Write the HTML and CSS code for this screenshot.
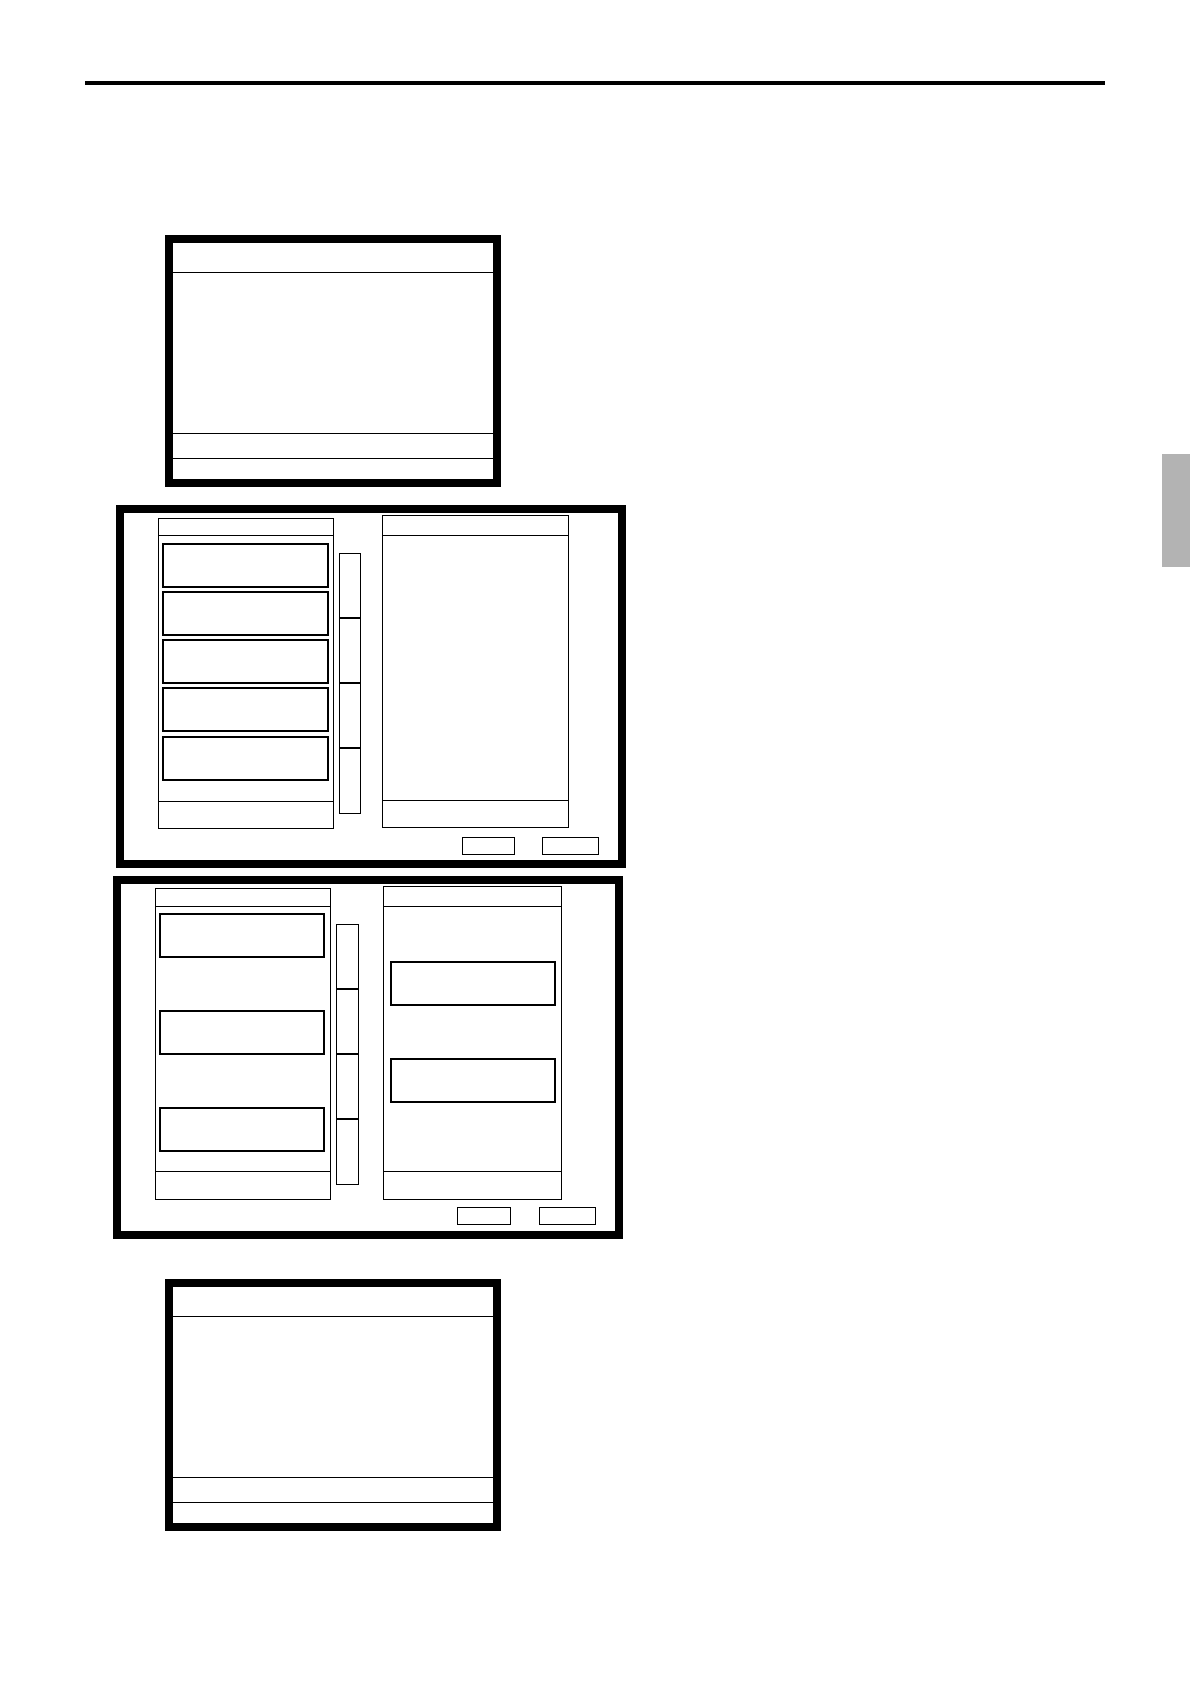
FILE: index.html
```html
<!DOCTYPE html>
<html lang="en">
<head>
<meta charset="utf-8">
<title>Screens</title>
<link rel="stylesheet" href="styles.css">
</head>
<body>
<div class="page">
  <div class="rule"></div>
  <div class="thumb-tab"></div>

  <div class="screen screen--one">
    <div class="scr-head"></div>
    <div class="scr-body"></div>
    <div class="scr-row"></div>
    <div class="scr-foot"></div>
  </div>

  <div class="dialog dialog--a">
    <div class="dlg-main">
      <div class="panel panel--left">
        <div class="panel-head"></div>
        <div class="panel-body list-dense">
          <div class="item"></div>
          <div class="item"></div>
          <div class="item"></div>
          <div class="item"></div>
          <div class="item"></div>
        </div>
        <div class="panel-foot"></div>
      </div>
      <div class="scroll">
        <div class="seg"></div>
        <div class="seg"></div>
        <div class="seg"></div>
        <div class="seg"></div>
      </div>
      <div class="panel panel--right">
        <div class="panel-head"></div>
        <div class="panel-body"></div>
        <div class="panel-foot"></div>
      </div>
    </div>
    <div class="dlg-actions">
      <div class="btn btn--ok"></div>
      <div class="btn btn--cancel"></div>
    </div>
  </div>

  <div class="dialog dialog--b">
    <div class="dlg-main">
      <div class="panel panel--left">
        <div class="panel-head"></div>
        <div class="panel-body list-sparse">
          <div class="item"></div>
          <div class="item"></div>
          <div class="item"></div>
        </div>
        <div class="panel-foot"></div>
      </div>
      <div class="scroll">
        <div class="seg"></div>
        <div class="seg"></div>
        <div class="seg"></div>
        <div class="seg"></div>
      </div>
      <div class="panel panel--right">
        <div class="panel-head"></div>
        <div class="panel-body list-right">
          <div class="item"></div>
          <div class="item"></div>
        </div>
        <div class="panel-foot"></div>
      </div>
    </div>
    <div class="dlg-actions">
      <div class="btn btn--ok"></div>
      <div class="btn btn--cancel"></div>
    </div>
  </div>

  <div class="screen screen--two">
    <div class="scr-head"></div>
    <div class="scr-body"></div>
    <div class="scr-row"></div>
    <div class="scr-foot"></div>
  </div>
</div>
</body>
</html>
```

FILE: styles.css
```css
html, body {
  margin: 0;
  padding: 0;
  background: #ffffff;
  font-family: "Liberation Sans", Arial, sans-serif;
}

.page {
  position: relative;
  width: 1190px;
  min-height: 1684px;
  padding-top: 81px;
  box-sizing: border-box;
}

.rule {
  width: 1020px;
  height: 4px;
  margin-left: 85px;
  background: #000;
}

.thumb-tab {
  position: absolute;
  right: 0;
  top: 454px;
  width: 28px;
  height: 113px;
  background: #b3b3b3;
}

/* simple screens */
.screen {
  box-sizing: border-box;
  width: 336px;
  height: 252px;
  margin-left: 165px;
  border: 8px solid #000;
  display: flex;
  flex-direction: column;
}
.screen--one { margin-top: 150px; }
.screen--two { margin-top: 40px; }

.scr-head {
  height: 30px;
  box-sizing: border-box;
  border-bottom: 1px solid #000;
}
.scr-body {
  height: 161px;
  box-sizing: border-box;
  border-bottom: 1px solid #000;
}
.scr-row {
  height: 25px;
  box-sizing: border-box;
  border-bottom: 1px solid #000;
}
.scr-foot { flex: 1; }

/* dialogs */
.dialog {
  box-sizing: border-box;
  width: 510px;
  height: 363px;
  border: 8px solid #000;
  display: flex;
  flex-direction: column;
}
.dialog--a {
  margin-top: 18px;
  margin-left: 116px;
  padding: 0 19px 0 33.5px;
}
.dialog--b {
  margin-top: 8px;
  margin-left: 113px;
  padding: 0 19.5px 0 33.5px;
}

.dlg-main {
  display: flex;
  align-items: flex-start;
}

.panel {
  box-sizing: border-box;
  border: 1px solid #000;
  display: flex;
  flex-direction: column;
}
.panel-head {
  box-sizing: border-box;
  border-bottom: 1px solid #000;
}
.panel-body {
  flex: 1;
  display: flex;
  flex-direction: column;
  box-sizing: border-box;
}
.panel-foot {
  box-sizing: border-box;
  border-top: 1px solid #000;
}

.item {
  box-sizing: border-box;
  border: 2px solid #000;
  height: 45px;
  width: 167px;
}

/* dialog A sizes */
.dialog--a .panel--left {
  width: 176.5px;
  height: 311px;
  margin-top: 4.5px;
}
.dialog--a .panel--left .panel-head { height: 17px; }
.dialog--a .panel--left .panel-foot { height: 27px; }
.dialog--a .panel--right {
  width: 187.5px;
  height: 312.5px;
  margin-top: 2.3px;
  margin-left: 20.5px;
}
.dialog--a .panel--right .panel-head { height: 19.5px; }
.dialog--a .panel--right .panel-foot { height: 27px; }
.dialog--a .scroll {
  width: 22.5px;
  height: 260.5px;
  margin-top: 40px;
  margin-left: 4.5px;
}
.dialog--a .dlg-actions { margin-top: 8px; }
.dialog--a .btn--ok { width: 52.5px; }
.dialog--a .btn--cancel { width: 57px; }

.list-dense {
  padding: 7px 0 0 3px;
  gap: 3.3px;
}

/* dialog B sizes */
.dialog--b .panel--left {
  width: 176.5px;
  height: 311.5px;
  margin-top: 4.3px;
}
.dialog--b .panel--left .panel-head { height: 17.5px; }
.dialog--b .panel--left .panel-foot { height: 28px; }
.dialog--b .panel--right {
  width: 179.5px;
  height: 313.5px;
  margin-top: 2.3px;
  margin-left: 23.5px;
}
.dialog--b .panel--right .panel-head { height: 19.5px; }
.dialog--b .panel--right .panel-foot { height: 28px; }
.dialog--b .scroll {
  width: 23.5px;
  height: 260.5px;
  margin-top: 40px;
  margin-left: 4.5px;
}
.dialog--b .dlg-actions { margin-top: 7.3px; }
.dialog--b .btn--ok { width: 54px; }
.dialog--b .btn--cancel { width: 57px; }

.list-sparse {
  padding: 6.7px 0 0 3px;
  gap: 51.6px;
}
.list-sparse .item { width: 166.5px; }
.list-right {
  padding: 54.7px 0 0 6px;
  gap: 51.3px;
}
.list-right .item { width: 166.5px; }

.scroll {
  box-sizing: border-box;
  border: 1px solid #000;
  display: flex;
  flex-direction: column;
}
.seg { flex: 1; }
.seg + .seg { border-top: 2px solid #000; }

.dlg-actions {
  display: flex;
  justify-content: flex-end;
  gap: 27.5px;
}
.btn {
  box-sizing: border-box;
  height: 18px;
  border: 1.5px solid #000;
}
```
